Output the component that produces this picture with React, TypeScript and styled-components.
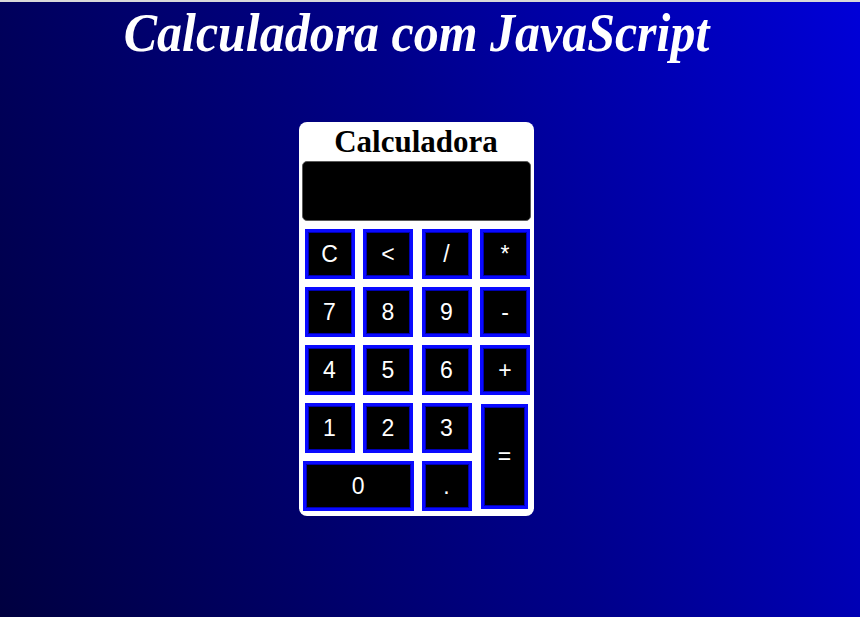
import React from "react";
import styled, { createGlobalStyle } from "styled-components";

const Global = createGlobalStyle`
  html { background: #d9d9d9; }
  body {
    margin: 0;
    padding-top: 2px;
  }
`;

const Page = styled.div`
  min-height: 615px;
  background: linear-gradient(70deg, #000040 0%, #00008a 55%, #0000d8 100%);
  display: flex;
  flex-direction: column;
  align-items: center;
  padding-right: 28px;
  box-sizing: border-box;
`;

const Heading = styled.h1`
  margin: 0;
  font-family: "Liberation Serif", serif;
  font-style: italic;
  font-weight: bold;
  font-size: 54px;
  line-height: 62px;
  color: #ffffff;
  text-align: center;
  white-space: nowrap;
  transform: scaleX(0.925);
`;

const Calculator = styled.div`
  margin-top: 58px;
  width: 235px;
  box-sizing: border-box;
  background: #ffffff;
  border-radius: 8px;
  padding: 0 3px 5px;
  display: flex;
  flex-direction: column;
`;

const Title = styled.h2`
  margin: 0;
  height: 39px;
  line-height: 39px;
  font-family: "Liberation Serif", serif;
  font-weight: bold;
  font-size: 31px;
  color: #000000;
  text-align: center;
`;

const Display = styled.div`
  height: 60px;
  box-sizing: border-box;
  background: #000000;
  border: 1px solid #5a5a5a;
  border-radius: 5px;
`;

const Keys = styled.div`
  margin-top: 8px;
  padding-left: 3px;
  display: grid;
  grid-template-columns: repeat(4, 50px);
  grid-auto-rows: 50px;
  column-gap: 8.5px;
  row-gap: 8px;
`;

const Key = styled.button<{ $wide?: boolean; $tall?: boolean }>`
  grid-column: ${(p) => (p.$wide ? "span 2" : "auto")};
  grid-row: ${(p) => (p.$tall ? "span 2" : "auto")};
  margin: ${(p) => (p.$wide ? "0 -1px 0 -2px" : p.$tall ? "1px 2px 2px 1px" : "0")};
  padding: 0;
  background: #000000;
  border: 3px solid #0a0aff;
  box-shadow: inset 0 0 0 1px #0000b4;
  color: #ffffff;
  font-family: "Liberation Sans", Arial, sans-serif;
  font-size: 23px;
  display: flex;
  align-items: center;
  justify-content: center;
  cursor: pointer;
`;

const keys: { label: string; wide?: boolean; tall?: boolean }[] = [
  { label: "C" },
  { label: "<" },
  { label: "/" },
  { label: "*" },
  { label: "7" },
  { label: "8" },
  { label: "9" },
  { label: "-" },
  { label: "4" },
  { label: "5" },
  { label: "6" },
  { label: "+" },
  { label: "1" },
  { label: "2" },
  { label: "3" },
  { label: "=", tall: true },
  { label: "0", wide: true },
  { label: "." },
];

export default function App() {
  return (
    <>
      <Global />
      <Page>
        <Heading>Calculadora com JavaScript</Heading>
        <Calculator>
          <Title>Calculadora</Title>
          <Display />
          <Keys>
            {keys.map((k) => (
              <Key key={k.label} $wide={k.wide} $tall={k.tall}>
                {k.label}
              </Key>
            ))}
          </Keys>
        </Calculator>
      </Page>
    </>
  );
}
